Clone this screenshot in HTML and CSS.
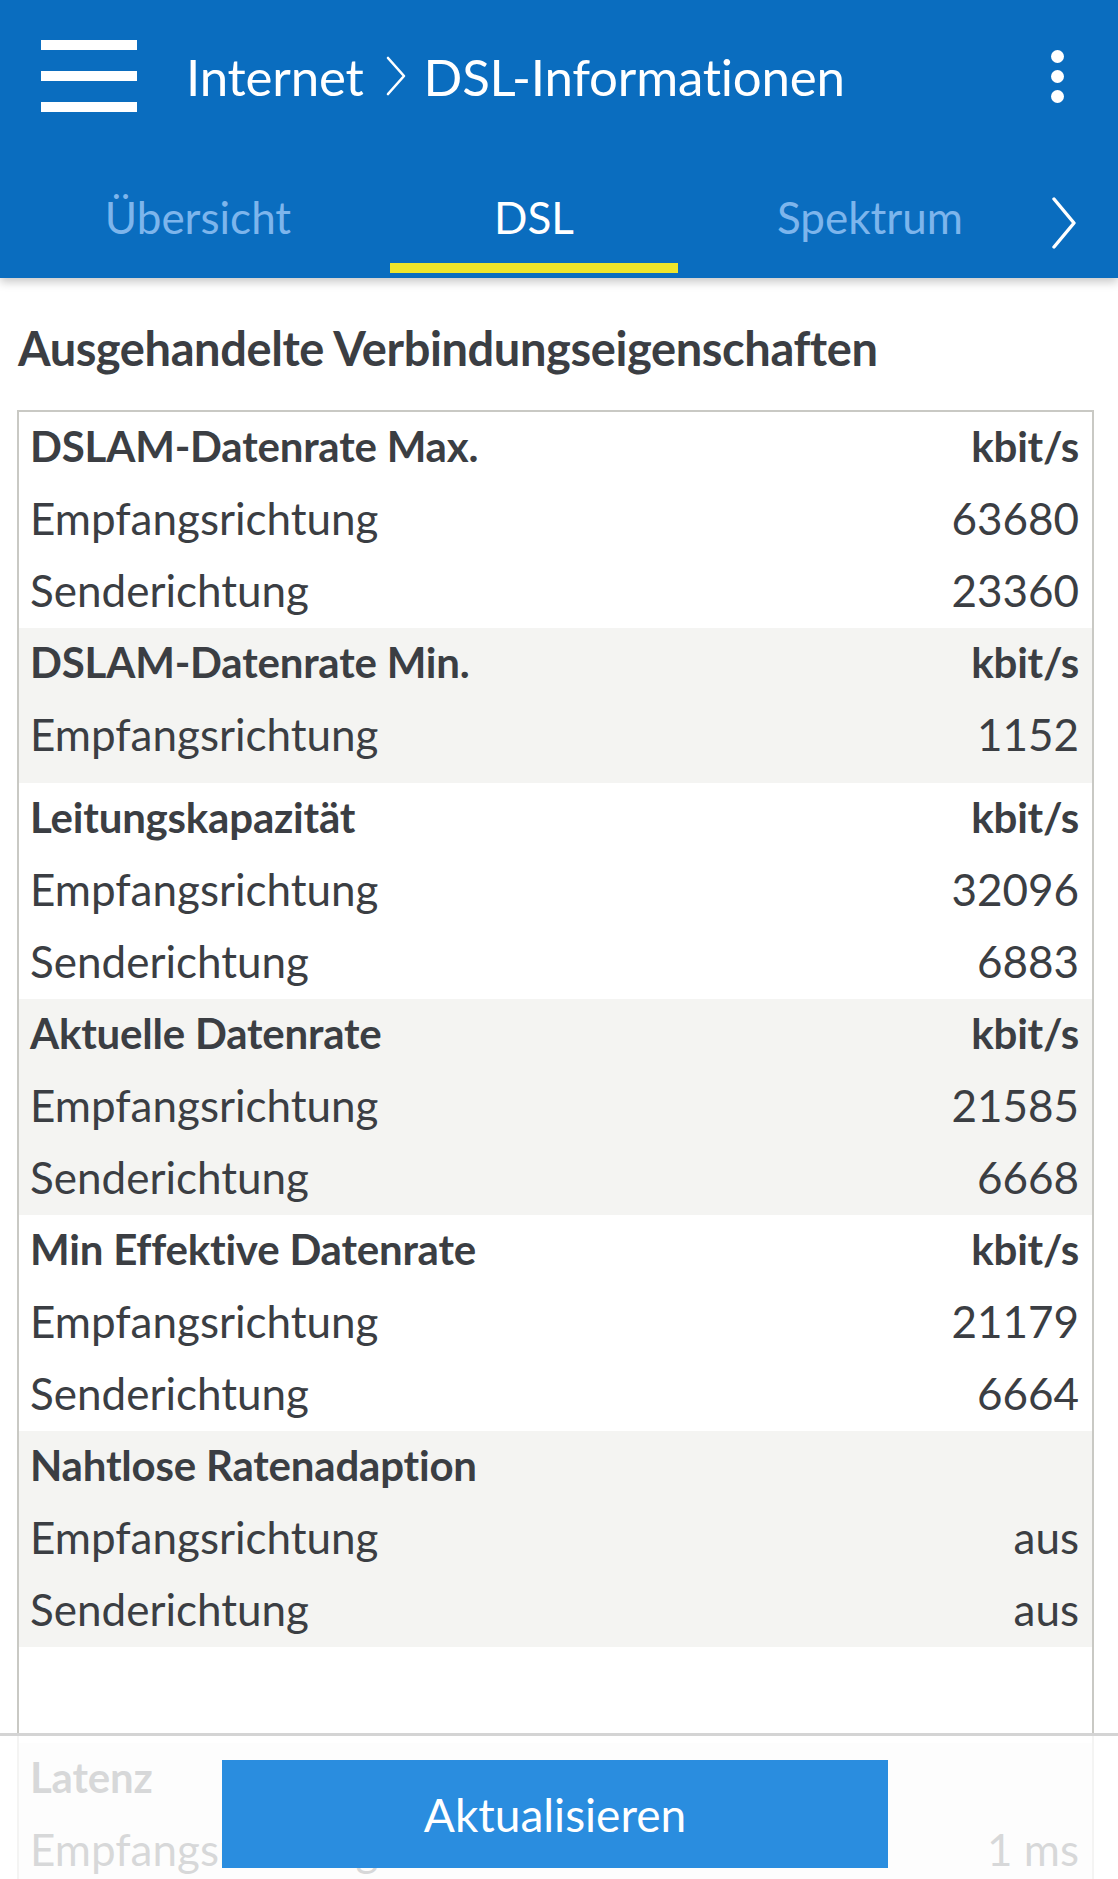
FILE: index.html
```html
<!DOCTYPE html>
<html lang="de">
<head>
<meta charset="utf-8">
<title>DSL-Informationen</title>
<link rel="stylesheet" href="styles.css">
</head>
<body>
<header class="appbar">
  <div class="toolbar">
    <div class="menu" aria-label="Menü"><span></span><span></span><span></span></div>
    <h1 class="title">
      <span>Internet</span>
      <svg class="crumb" viewBox="0 0 22 40" width="22" height="40"><polyline points="3,2 19,20 3,38" fill="none" stroke="#fff" stroke-width="2.6" stroke-linecap="round" stroke-linejoin="round"/></svg>
      <span>DSL-Informationen</span>
    </h1>
    <div class="more"><i></i><i></i><i></i></div>
  </div>
  <nav class="tabs">
    <a class="tab"><span class="tab-label">Übersicht</span></a>
    <a class="tab active"><span class="tab-label">DSL</span></a>
    <a class="tab"><span class="tab-label">Spektrum</span></a>
    <span class="tab-next">
      <svg viewBox="0 0 26 52" width="26" height="52"><polyline points="3,2 23,26 3,50" fill="none" stroke="#fff" stroke-width="3.4" stroke-linecap="round" stroke-linejoin="round"/></svg>
    </span>
  </nav>
</header>

<main class="content">
  <h2 class="section-title">Ausgehandelte Verbindungseigenschaften</h2>
  <div class="panel">
    <section class="group">
      <div class="row head"><span>DSLAM-Datenrate Max.</span><span>kbit/s</span></div>
      <div class="row"><span>Empfangsrichtung</span><span>63680</span></div>
      <div class="row"><span>Senderichtung</span><span>23360</span></div>
    </section>
    <section class="group alt pad">
      <div class="row head"><span>DSLAM-Datenrate Min.</span><span>kbit/s</span></div>
      <div class="row"><span>Empfangsrichtung</span><span>1152</span></div>
    </section>
    <section class="group">
      <div class="row head"><span>Leitungskapazität</span><span>kbit/s</span></div>
      <div class="row"><span>Empfangsrichtung</span><span>32096</span></div>
      <div class="row"><span>Senderichtung</span><span>6883</span></div>
    </section>
    <section class="group alt">
      <div class="row head"><span>Aktuelle Datenrate</span><span>kbit/s</span></div>
      <div class="row"><span>Empfangsrichtung</span><span>21585</span></div>
      <div class="row"><span>Senderichtung</span><span>6668</span></div>
    </section>
    <section class="group">
      <div class="row head"><span>Min Effektive Datenrate</span><span>kbit/s</span></div>
      <div class="row"><span>Empfangsrichtung</span><span>21179</span></div>
      <div class="row"><span>Senderichtung</span><span>6664</span></div>
    </section>
    <section class="group alt">
      <div class="row head"><span>Nahtlose Ratenadaption</span><span></span></div>
      <div class="row"><span>Empfangsrichtung</span><span>aus</span></div>
      <div class="row"><span>Senderichtung</span><span>aus</span></div>
    </section>
    <div class="spacer"></div>
    <section class="group alt">
      <div class="row head"><span>Latenz</span><span></span></div>
      <div class="row"><span>Empfangsrichtung</span><span>1 ms</span></div>
    </section>
  </div>
</main>

<footer class="actions">
  <button class="refresh" type="button">Aktualisieren</button>
</footer>
</body>
</html>
```

FILE: styles.css
```css
html, body {
  margin: 0;
  padding: 0;
  background: #ffffff;
}

body {
  font-family: "Lato", "Noto Sans", sans-serif;
  color: #3b3e43;
  width: 1118px;
}

/* ---------- App bar ---------- */
.appbar {
  background: #0a6dbf;
  height: 278px;
  box-shadow: 0 4px 9px rgba(0, 0, 0, 0.22);
  position: relative;
  z-index: 2;
}

.toolbar {
  height: 152px;
  display: flex;
  align-items: center;
  padding-left: 41px;
  padding-right: 54px;
  padding-bottom: 4px;
}

.menu {
  width: 96px;
  height: 72px;
  display: flex;
  flex-direction: column;
  justify-content: space-between;
}

.menu span {
  display: block;
  height: 10px;
  background: #ffffff;
}

.title {
  margin: 0 0 0 49px;
  flex: 1;
  display: flex;
  align-items: center;
  color: #ffffff;
  font-weight: 400;
  font-size: 51px;
  letter-spacing: -0.2px;
  white-space: nowrap;
}

.crumb {
  margin: 0 17px 0 21px;
  flex: none;
}

.more {
  display: flex;
  flex-direction: column;
  gap: 7px;
}

.more i {
  display: block;
  width: 13px;
  height: 13px;
  border-radius: 50%;
  background: #ffffff;
}

/* ---------- Tabs ---------- */
.tabs {
  display: flex;
  padding-left: 30px;
}

.tab {
  width: 336px;
  box-sizing: border-box;
  padding: 0 24px 5px;
  color: #7db5ec;
  font-size: 44px;
  text-decoration: none;
}

.tab-label {
  display: flex;
  justify-content: center;
  align-items: center;
  box-sizing: border-box;
  height: 117px;
  padding-top: 15px;
  border-bottom: 10px solid transparent;
}

.tab.active {
  color: #ffffff;
}

.tab.active .tab-label {
  border-bottom-color: #efe52b;
}

.tab-next {
  flex: 1;
  display: flex;
  padding: 41px 0 0 13px;
}

/* ---------- Content ---------- */
.content {
  padding-top: 1px;
}

.section-title {
  margin: 39px 0 0 18px;
  height: 92px;
  font-size: 47px;
  line-height: 60px;
  font-weight: 700;
  letter-spacing: -0.4px;
  color: #3b3e43;
}

.panel {
  margin: 0 24px 0 17px;
  border: 2px solid #c9c9c4;
  border-bottom: none;
}

.group {
  background: #ffffff;
}

.group.alt {
  background: #f4f4f2;
}

.group.pad {
  padding-bottom: 11px;
}

.row {
  height: 72px;
  box-sizing: border-box;
  display: flex;
  justify-content: space-between;
  align-items: center;
  padding: 0 13px 4px 11px;
  font-size: 44px;
  white-space: nowrap;
}

.row.head {
  font-weight: 700;
  font-size: 42px;
  letter-spacing: -0.2px;
}

.spacer {
  height: 96px;
  background: #ffffff;
}

/* ---------- Bottom action bar (overlays the list) ---------- */
.actions {
  position: fixed;
  left: 0;
  right: 0;
  bottom: 0;
  height: 146px;
  box-sizing: border-box;
  border-top: 3px solid #d4d4d4;
  background: rgba(255, 255, 255, 0.8);
  padding: 24px 0 0 222px;
  z-index: 3;
}

.refresh {
  display: block;
  width: 666px;
  height: 108px;
  border: none;
  margin: 0;
  background: #2a8ddf;
  color: #ffffff;
  font-family: "Lato", "Noto Sans", sans-serif;
  font-size: 46px;
  padding: 0;
}
```
